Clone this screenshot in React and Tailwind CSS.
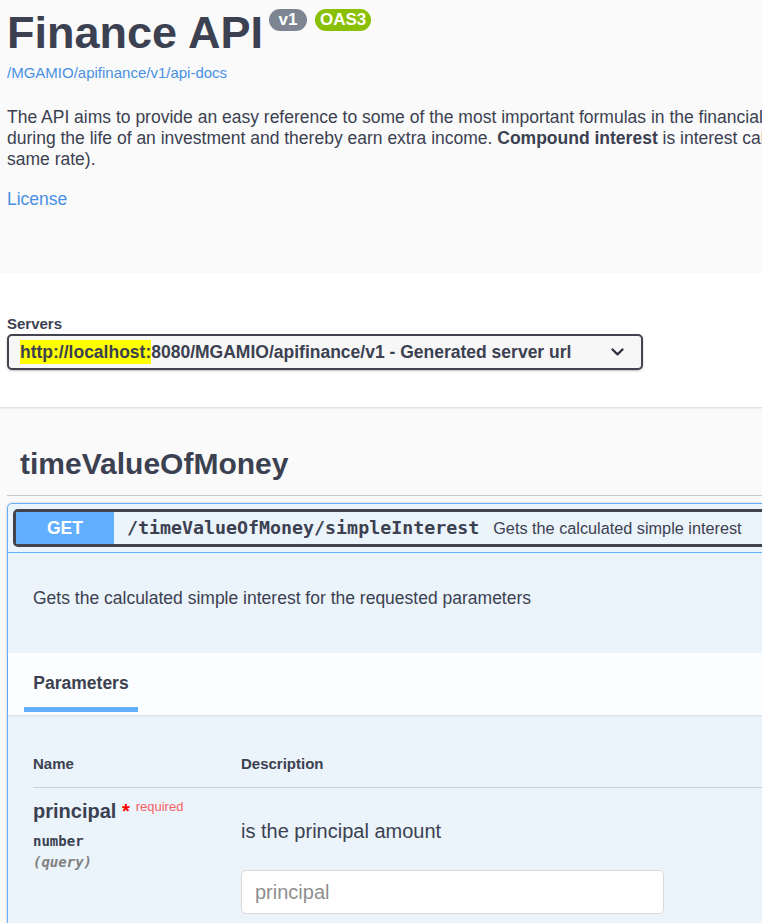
import React from 'react';

function Badge({ children, className }) {
  return (
    <span className={`h-[22px] rounded-[12px] text-white text-[17px] font-bold leading-[22px] text-center ${className}`}>
      {children}
    </span>
  );
}

function InfoSection() {
  return (
    <div className="h-[273px] px-[7px] pt-[9px]">
      <div className="flex items-start">
        <h2 className="mt-px text-[45px] leading-[45px] font-bold">Finance API</h2>
        <div className="ml-[6px] flex gap-[8px]">
          <Badge className="w-[38px] bg-[#7d8492]">v1</Badge>
          <Badge className="px-[5px] bg-[#89bf04]">OAS3</Badge>
        </div>
      </div>
      <a className="block mt-[9px] text-[15px] leading-[18px] text-[#4990e2]">/MGAMIO/apifinance/v1/api-docs</a>
      <p className="mt-[25px] text-[17.5px] leading-[21px] whitespace-nowrap">
        The API aims to provide an easy reference to some of the most important formulas in the financial world. Simple interest is calculated only on the principal
        <br />
        during the life of an investment and thereby earn extra income. <b>Compound interest</b> is interest calculated on the principal and on the accumulated interest (at the
        <br />
        same rate).
      </p>
      <a className="block mt-[19px] text-[17.5px] leading-[21px] text-[#4990e2]">License</a>
    </div>
  );
}

function ServersBar() {
  return (
    <div className="relative z-10 h-[134px] bg-white shadow-[0_1px_2px_0_rgba(0,0,0,0.15)] px-[7px] pt-[42px]">
      <div className="text-[15px] leading-[18px] font-bold">Servers</div>
      <div className="mt-px w-[636px] h-[36px] border-2 border-[#41444e] rounded-[5px] bg-[#f7f7f7] shadow-[0_1px_2px_0_rgba(0,0,0,0.25)] flex items-center pl-[11px] pr-[17px]">
        <span className="text-[17.5px] font-bold whitespace-nowrap">
          <mark className="bg-[#ffff00] text-[#3b4151] py-[2px]">http://localhost:</mark>8080/MGAMIO/apifinance/v1 - Generated server url
        </span>
        <svg className="ml-auto" width="13" height="8" viewBox="0 0 13 8">
          <path d="M1.5 1.5 L6.5 6.3 L11.5 1.5" stroke="#2d3140" strokeWidth="2.3" fill="none" strokeLinecap="round" strokeLinejoin="round" />
        </svg>
      </div>
    </div>
  );
}

function ParamRow() {
  return (
    <div className="flex pt-[11px]">
      <div className="w-[208px] shrink-0">
        <div className="text-[20px] leading-[24px] font-bold whitespace-nowrap">
          principal<span className="text-[#ff0000]">{'\u00a0*'}</span>
          <span className="relative -top-[7.5px] pl-[6px] text-[13px] font-normal text-[#f76164]">required</span>
        </div>
        <div className="mt-[7px] font-['DejaVu_Sans_Mono',monospace] font-bold text-[14px] leading-[17px]">number</div>
        <div className="mt-[4px] font-['DejaVu_Sans_Mono',monospace] font-semibold italic text-[14px] leading-[17px] text-[#808080]">(query)</div>
      </div>
      <div>
        <p className="mt-[20px] text-[20px] leading-[24px]">is the principal amount</p>
        <input
          className="mt-[27px] block w-[423px] h-[44px] border border-[#d9d9d9] rounded-[5px] bg-white pl-[13px] text-[20px] outline-none placeholder:text-[#8f8f8f]"
          placeholder="principal"
        />
      </div>
    </div>
  );
}

function Operation() {
  return (
    <div className="mt-[7px] border border-[#61affe] bg-[#ebf3fb] rounded-[5px] shadow-[0_0_3px_rgba(0,0,0,0.19)]">
      <div className="p-[5px] border-b border-[#61affe]">
        <div className="flex items-center h-[38px] border-[3px] border-[#41444e] rounded-[5px]">
          <span className="w-[98px] h-[32px] shrink-0 bg-[#61affe] rounded-l-[2px] text-white font-bold text-[17.5px] flex items-center justify-center">
            GET
          </span>
          <span className="ml-[13px] font-['DejaVu_Sans_Mono',monospace] font-bold text-[18.3px] whitespace-nowrap">
            /timeValueOfMoney/simpleInterest
          </span>
          <span className="ml-[14px] text-[16.25px] whitespace-nowrap">Gets the calculated simple interest</span>
        </div>
      </div>
      <div className="pt-[35px]">
        <p className="px-[25px] text-[17.5px] leading-[21px]">Gets the calculated simple interest for the requested parameters</p>
        <div className="mt-[44px] h-[62px] bg-[rgba(255,255,255,0.8)] shadow-[0_1px_2px_rgba(0,0,0,0.1)] pl-[16px] pt-[20px]">
          <div className="w-[114px] flex flex-col items-center">
            <h4 className="text-[17.5px] leading-[21px] font-bold">Parameters</h4>
            <div className="mt-[13px] h-[5px] w-full bg-[#61affe]" />
          </div>
        </div>
        <div className="px-[25px] pt-[40px] pb-[20px]">
          <div className="flex text-[15px] leading-[18px] font-bold border-b border-[rgba(59,65,81,0.2)] pb-[14px]">
            <div className="w-[208px]">Name</div>
            <div>Description</div>
          </div>
          <ParamRow />
        </div>
      </div>
    </div>
  );
}

function TagSection() {
  return (
    <div className="px-[7px]">
      <h3 className="mt-[39px] pl-[13px] text-[30px] leading-[36px] font-bold border-b border-[#c9cbd0] pb-[13px]">
        timeValueOfMoney
      </h3>
      <Operation />
    </div>
  );
}

export default function App() {
  return (
    <div className="w-[762px] h-[923px] overflow-hidden bg-[#fafafa] text-[#3b4151] font-['Liberation_Sans',Arial,sans-serif]">
      <div className="w-[1100px]">
        <InfoSection />
        <ServersBar />
        <TagSection />
      </div>
    </div>
  );
}
